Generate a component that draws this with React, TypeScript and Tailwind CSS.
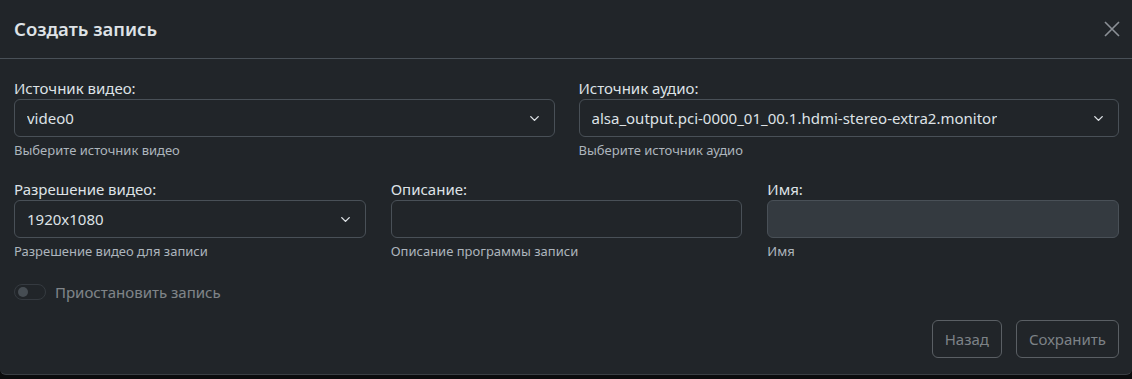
import { ChevronDown } from 'lucide-react';

const font = { fontFamily: '"Noto Sans", "Liberation Sans", sans-serif' };

interface FieldProps {
  label: string;
  help: string;
  children: React.ReactNode;
}

const Field = ({ label, help, children }: FieldProps) => (
  <div className="flex min-w-0 flex-col">
    <label className="text-[15px] leading-[22px] text-[#dee2e6]">{label}</label>
    {children}
    <div className="mt-[3px] text-[13px] leading-[21px] text-[#adb5bd]">{help}</div>
  </div>
);

const Select = ({ value }: { value: string }) => (
  <div className="flex h-[38px] items-center justify-between rounded-[6px] border border-[#495057] bg-[#212529] pr-[12px] pl-[12px]">
    <span className="truncate text-[15px] text-[#dee2e6]">{value}</span>
    <ChevronDown size={15} strokeWidth={2.25} className="shrink-0 text-[#dee2e6]" />
  </div>
);

export default function App() {
  return (
    <div className="h-[379px] w-[1132px] overflow-hidden bg-[#0b0c0d]" style={font}>
      <div className="flex h-[375px] flex-col rounded-b-[6px] border-b border-[#3a3f44] bg-[#212529]">
        <div className="flex h-[59px] shrink-0 items-center justify-between border-b border-[#495057] pr-[12px] pl-[14px]">
          <h5 className="text-[18.5px] font-semibold text-[#dee2e6]">Создать запись</h5>
          <svg width="16" height="16" viewBox="0 0 16 16" className="text-[#8b9096]">
            <path d="M1 1L15 15M15 1L1 15" stroke="currentColor" strokeWidth="1.6" />
          </svg>
        </div>

        <div className="flex flex-1 flex-col pt-[18px] pr-[13px] pl-[14px]">
          <div className="grid grid-cols-2 gap-x-[24px]">
            <Field label="Источник видео:" help="Выберите источник видео">
              <Select value="video0" />
            </Field>
            <Field label="Источник аудио:" help="Выберите источник аудио">
              <Select value="alsa_output.pci-0000_01_00.1.hdmi-stereo-extra2.monitor" />
            </Field>
          </div>

          <div className="mt-[17px] grid grid-cols-3 gap-x-[25px]">
            <Field label="Разрешение видео:" help="Разрешение видео для записи">
              <Select value="1920x1080" />
            </Field>
            <Field label="Описание:" help="Описание программы записи">
              <div className="h-[38px] rounded-[6px] border border-[#495057] bg-[#212529]" />
            </Field>
            <Field label="Имя:" help="Имя">
              <div className="h-[38px] rounded-[6px] border border-[#495057] bg-[#343a40]" />
            </Field>
          </div>

          <div className="mt-[18px] flex h-[24px] items-center gap-[9px] opacity-50">
            <div className="flex h-[16px] w-[32px] items-center rounded-full border border-[#495057] px-[3px]">
              <div className="h-[10px] w-[10px] rounded-full bg-[#6c757d]" />
            </div>
            <span className="text-[15px] text-[#dee2e6]">Приостановить запись</span>
          </div>
        </div>

        <div className="flex justify-end gap-[14px] pr-[13px] pb-[16px]">
          <button className="h-[38px] rounded-[6px] border border-[#5a5f64] px-[12px] text-[15px] text-[#7d8287]">
            Назад
          </button>
          <button className="h-[38px] rounded-[6px] border border-[#5a5f64] px-[12px] text-[15px] text-[#7d8287]">
            Сохранить
          </button>
        </div>
      </div>
    </div>
  );
}
